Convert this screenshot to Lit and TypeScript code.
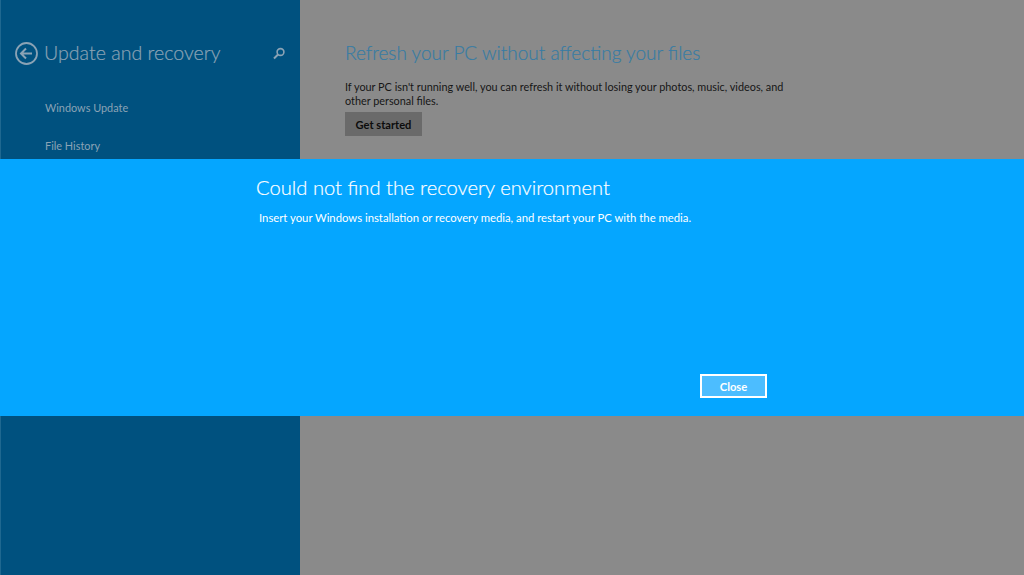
import { LitElement, html, css } from "lit";
import { customElement } from "lit/decorators.js";

@customElement("app-root")
export class AppRoot extends LitElement {
  static styles = css`
    :host { display: block; width: 1024px; height: 575px; position: relative; overflow: hidden; font-family: "Lato", "Open Sans", sans-serif; }
    .page { display: grid; grid-template-columns: 300px 1fr; height: 575px; background: #8a8a8a; }
    .side { background: #00517f; color: #8ba3b5; padding: 34px 15px 0 14px; border-left: 1px solid #1f6890; }
    .head { display: flex; align-items: center; height: 38px; }
    .back { width: 23px; height: 23px; margin-right: 6px; flex: none; }
    .head h1 { margin: 0 0 2px; font-size: 19.6px; font-weight: 300; -webkit-text-stroke: 0.2px currentColor; white-space: nowrap; flex: 1; color: #8ba3b5; }
    .search { width: 13px; height: 13px; margin-right: -1px; flex: none; }
    .nav { display: flex; flex-direction: column; gap: 23px; padding: 28px 0 0 30px; font-size: 10.9px; }
    .nav div { line-height: 15px; white-space: nowrap; }
    .main { padding: 40px 0 0 45px; }
    .main h2 { margin: 0; font-size: 19px; font-weight: 300; -webkit-text-stroke: 0.2px currentColor; color: #377ca4; line-height: 25px; white-space: nowrap; }
    .main p { margin: 15px 0 0; width: 445px; font-size: 10.85px; line-height: 14px; color: #161616; }
    .get { display: block; margin-top: 4px; width: 77px; height: 24px; border: 0; padding: 0; background: #6a6a6a; color: #0c0c0c; font: 700 11.1px "Lato", sans-serif; }
    .dialog { position: absolute; left: 0; top: 159px; width: 1024px; height: 257px; background: #05a6ff; color: #fff; display: flex; flex-direction: column; padding: 15px 0 0 256px; box-sizing: border-box; }
    .dialog h3 { margin: 0; font-size: 20.2px; font-weight: 300; -webkit-text-stroke: 0.2px currentColor; line-height: 27px; white-space: nowrap; }
    .dialog p { margin: 9px 0 0 3px; font-size: 11.3px; line-height: 15px; white-space: nowrap; }
    .close { margin: 149px 0 0 444px; width: 67px; height: 24px; box-sizing: border-box; border: 2px solid #fff; background: #4cbdff; color: #fff; padding: 0; font: 700 11.2px "Lato", sans-serif; }
  `;
  render() {
    return html`
      <div class="page">
        <aside class="side">
          <div class="head">
            <svg class="back" viewBox="0 0 23 23" fill="none" stroke="#8ba3b5">
              <circle cx="11.5" cy="11.5" r="10.5" stroke-width="1.8" />
              <path d="M6 11.5H17M11 6.5L6 11.5L11 16.5" stroke-width="2" />
            </svg>
            <h1>Update and recovery</h1>
            <svg class="search" viewBox="0 0 13 13" fill="none" stroke="#8ba3b5">
              <circle cx="7.5" cy="5" r="3.4" stroke-width="1.6" />
              <path d="M5 7.5L1 11.5" stroke-width="2" />
            </svg>
          </div>
          <nav class="nav">
            <div>Windows Update</div>
            <div>File History</div>
          </nav>
        </aside>
        <main class="main">
          <h2>Refresh your PC without affecting your files</h2>
          <p>If your PC isn't running well, you can refresh it without losing your photos, music, videos, and other personal files.</p>
          <button class="get">Get started</button>
        </main>
      </div>
      <section class="dialog">
        <h3>Could not find the recovery environment</h3>
        <p>Insert your Windows installation or recovery media, and restart your PC with the media.</p>
        <button class="close">Close</button>
      </section>
    `;
  }
}
